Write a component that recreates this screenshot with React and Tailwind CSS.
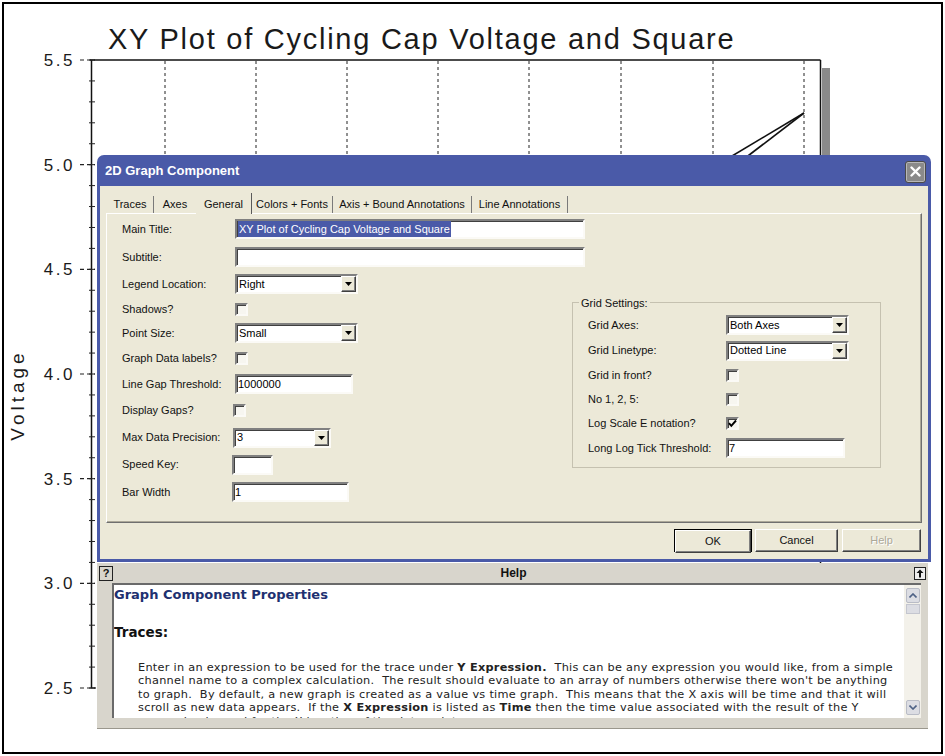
// Plot backdrop with the "2D Graph Component" properties dialog and help pane over it
const sunken =
  "border-2 border-t-[#808080] border-l-[#808080] border-r-[#fbfaf6] border-b-[#fbfaf6] shadow-[inset_1px_1px_0_#404040]";

function Chart() {
  const gridX = [165, 256, 347, 438, 529, 621, 713, 804];
  const labels = ["5.5", "5.0", "4.5", "4.0", "3.5", "3.0", "2.5"];
  const step = 104.67;
  const minor = Array.from({ length: 31 }, (_, i) => 60 + (i * step) / 5);

  return (
    <svg width="937" height="698" viewBox="4 54 937 698" className="block overflow-visible">
      {gridX.map((x) => (
        <line key={x} x1={x} y1="61" x2={x} y2="688" stroke="#222" strokeWidth="1" strokeDasharray="3 3" />
      ))}
      <line x1="90" y1="60" x2="820.5" y2="60" stroke="#111" strokeWidth="1.5" />
      <line x1="820.5" y1="60" x2="820.5" y2="688" stroke="#111" strokeWidth="1.5" />
      <rect x="822" y="68" width="8" height="480" fill="#8a8a8a" />
      <line x1="91.5" y1="60" x2="91.5" y2="688" stroke="#111" strokeWidth="1.5" />
      <line x1="91" y1="688" x2="96" y2="688" stroke="#111" strokeWidth="1.2" />
      {minor.map((y) => (
        <line key={y} x1="89" y1={y} x2="95" y2={y} stroke="#222" strokeWidth="1" />
      ))}
      {labels.map((t, i) => {
        const y = 60 + i * step;
        return (
          <g key={t}>
            <line x1="80" y1={y} x2="95" y2={y} stroke="#222" strokeWidth="1.2" strokeDasharray="4 3" />
            <text x="75" y={y + 6} textAnchor="end" fontSize="17" letterSpacing="2.5" fill="#1a1a1a">
              {t}
            </text>
          </g>
        );
      })}
      <line x1="804" y1="113" x2="722" y2="162" stroke="#111" strokeWidth="1.6" />
      <line x1="804" y1="113" x2="740" y2="162" stroke="#111" strokeWidth="1.6" />
      <text
        x="17"
        y="395"
        transform="rotate(-90 17 395)"
        textAnchor="middle"
        dominantBaseline="central"
        fontSize="19"
        letterSpacing="4"
        fill="#1a1a1a"
      >
        Voltage
      </text>
    </svg>
  );
}

function TextBox({ className, children }) {
  return (
    <div className={`${className} shrink-0 h-[20px] bg-white ${sunken} flex items-center pl-[1px] text-[11px] text-black whitespace-nowrap`}>
      {children}
    </div>
  );
}

function Select({ className, value }) {
  return (
    <div className={`${className} shrink-0 h-[20px] bg-white ${sunken} flex items-center`}>
      <span className="flex-1 pl-[2px] text-[11px] text-black">{value}</span>
      <span className="w-[15px] h-[16px] flex items-center justify-center bg-[#ece9d8] border border-t-white border-l-white border-r-[#404040] border-b-[#404040] shadow-[inset_-1px_-1px_0_#808080]">
        <svg width="7" height="4" viewBox="0 0 7 4">
          <path d="M0 0h7L3.5 4z" fill="#000" />
        </svg>
      </span>
    </div>
  );
}

function Check({ checked, className = "" }) {
  return (
    <div className={`${className} shrink-0 w-[13px] h-[13px] bg-[#f7f6f0] ${sunken} flex items-center justify-center`}>
      {checked && (
        <svg width="9" height="9" viewBox="0 0 9 9">
          <path d="M1 4.2 L3.3 6.8 L8 1.5" fill="none" stroke="#000" strokeWidth="1.9" />
        </svg>
      )}
    </div>
  );
}

function Row({ h, w = "w-[113px]", label, children }) {
  return (
    <div className={`${h} flex items-center`}>
      <span className={`${w} shrink-0 text-[11px] text-[#111] whitespace-nowrap`}>{label}</span>
      {children}
    </div>
  );
}

function Tabs() {
  const tabs = [
    { name: "Traces", cls: "w-[47px] h-[17px] border-r border-r-[#7a7a7a]" },
    { name: "Axes", cls: "w-[42px] h-[17px]" },
    { name: "General", cls: "w-[56px] h-[21px] -mb-[1px] pt-[3px] items-start border-r border-r-[#5a5a5a] relative z-10", active: true },
    { name: "Colors + Fonts", cls: "w-[81px] h-[17px] border-r border-r-[#7a7a7a]" },
    { name: "Axis + Bound Annotations", cls: "w-[139px] h-[17px] border-r border-r-[#7a7a7a]" },
    { name: "Line Annotations", cls: "w-[96px] h-[17px] border-r border-r-[#7a7a7a]" },
  ];
  return (
    <div className="h-[20px] flex items-end ml-[1px]">
      {tabs.map((t) => (
        <div
          key={t.name}
          className={`${t.cls} bg-[#ece9d8] flex justify-center ${t.active ? "" : "items-center"} text-[11px] text-[#111] whitespace-nowrap`}
        >
          {t.name}
        </div>
      ))}
    </div>
  );
}

function GridSettings() {
  return (
    <div className="relative mt-[88px] w-[309px] h-[166px] border border-[#c5c1b0] pl-[15px] pt-[9px] flex flex-col">
      <span className="absolute -top-[8px] left-[6px] px-[2px] bg-[#ece9d8] text-[11px] text-[#111]">Grid Settings:</span>
      <Row h="h-[26px]" w="w-[138px]" label="Grid Axes:">
        <Select className="w-[123px]" value="Both Axes" />
      </Row>
      <Row h="h-[25px]" w="w-[138px]" label="Grid Linetype:">
        <Select className="w-[123px]" value="Dotted Line" />
      </Row>
      <Row h="h-[24px]" w="w-[138px]" label="Grid in front?">
        <Check />
      </Row>
      <Row h="h-[24px]" w="w-[138px]" label="No 1, 2, 5:">
        <Check />
      </Row>
      <Row h="h-[24px]" w="w-[138px]" label="Log Scale E notation?">
        <Check checked />
      </Row>
      <Row h="h-[26px]" w="w-[138px]" label="Long Log Tick Threshold:">
        <TextBox className="w-[119px]">7</TextBox>
      </Row>
    </div>
  );
}

function Panel() {
  return (
    <div className="h-[310px] border border-t-white border-l-white border-r-[#6f6f6f] border-b-[#6f6f6f] shadow-[inset_-1px_-1px_0_#aca899] flex items-start">
      <div className="w-[465px] shrink-0 pl-[15px] pt-[1px] flex flex-col">
        <Row h="h-[28px]" label="Main Title:">
          <TextBox className="w-[350px]">
            <span className="bg-[#4a5aa8] text-white px-[1px]">XY Plot of Cycling Cap Voltage and Square</span>
          </TextBox>
        </Row>
        <Row h="h-[28px]" label="Subtitle:">
          <TextBox className="w-[350px]" />
        </Row>
        <Row h="h-[26px]" label="Legend Location:">
          <Select className="w-[123px]" value="Right" />
        </Row>
        <Row h="h-[24px]" label="Shadows?">
          <Check />
        </Row>
        <Row h="h-[24px]" label="Point Size:">
          <Select className="w-[123px]" value="Small" />
        </Row>
        <Row h="h-[26px]" label="Graph Data labels?">
          <Check />
        </Row>
        <Row h="h-[26px]" label="Line Gap Threshold:">
          <TextBox className="w-[118px]">1000000</TextBox>
        </Row>
        <Row h="h-[27px]" label="Display Gaps?">
          <Check className="-ml-[2px]" />
        </Row>
        <Row h="h-[27px]" label="Max Data Precision:">
          <Select className="w-[98px] -ml-[2px]" value="3" />
        </Row>
        <Row h="h-[27px]" label="Speed Key:">
          <TextBox className="w-[41px] -ml-[3px]" />
        </Row>
        <Row h="h-[28px]" label="Bar Width">
          <TextBox className="w-[117px] -ml-[3px]">1</TextBox>
        </Row>
      </div>
      <GridSettings />
    </div>
  );
}

function Buttons() {
  const raised =
    "h-[23px] flex items-center justify-center text-[11px] bg-[#ece9d8] border border-t-white border-l-white border-r-[#404040] border-b-[#404040] shadow-[inset_-1px_-1px_0_#808080]";
  return (
    <div className="mt-[6px] h-[23px] flex justify-end pr-[1px]">
      <div className="w-[78px] h-[23px] border border-black">
        <div className={`${raised} h-[21px] text-[#111]`}>OK</div>
      </div>
      <div className={`${raised} w-[83px] ml-[3px] text-[#111]`}>Cancel</div>
      <div className={`${raised} w-[79px] ml-[4px] text-[#aca899] [text-shadow:1px_1px_0_#fff]`}>Help</div>
    </div>
  );
}

function Dialog() {
  return (
    <div className="absolute left-[97px] top-[155px] w-[834px] h-[407px] flex flex-col">
      <div className="h-[31px] bg-[#4a5aa8] rounded-t-[7px] flex items-center justify-between pl-[8px] pr-[5px]">
        <span className="text-white text-[13px] font-bold">2D Graph Component</span>
        <div className="mt-[2px] w-[21px] h-[22px] rounded-[3px] bg-[#8a8a8a] border border-[#4a4a4a] shadow-[inset_0_0_0_1px_#b8b8b8] flex items-center justify-center">
          <svg width="11" height="11" viewBox="0 0 11 11">
            <path d="M1.5 1.5 L9.5 9.5 M9.5 1.5 L1.5 9.5" stroke="#fff" strokeWidth="2.4" strokeLinecap="round" />
          </svg>
        </div>
      </div>
      <div className="flex-1 bg-[#ece9d8] border-x-[3px] border-b-[3px] border-[#4a5aa8] px-[6px] pt-[7px] flex flex-col">
        <Tabs />
        <Panel />
        <Buttons />
      </div>
    </div>
  );
}

function Scrollbar() {
  const btn =
    "w-[14px] h-[15px] mx-auto bg-[#dcdde3] border border-[#b9bcc6] rounded-[2px] flex items-center justify-center";
  return (
    <div className="w-[17px] bg-[#f3f1ea] flex flex-col py-[3px]">
      <div className={btn}>
        <svg width="8" height="5" viewBox="0 0 8 5">
          <path d="M0.5 4.5 L4 1 L7.5 4.5" fill="none" stroke="#4d6185" strokeWidth="1.6" />
        </svg>
      </div>
      <div className="w-[14px] h-[10px] mx-auto mt-[1px] bg-[#dcdde3] border border-[#c4c6cf]" />
      <div className="flex-1" />
      <div className={btn}>
        <svg width="8" height="5" viewBox="0 0 8 5">
          <path d="M0.5 0.5 L4 4 L7.5 0.5" fill="none" stroke="#4d6185" strokeWidth="1.6" />
        </svg>
      </div>
    </div>
  );
}

function HelpPane() {
  return (
    <div className="absolute left-[97px] top-[563px] w-[831px] h-[166px] bg-[#d8d5cc] border-b border-[#9a978d] flex flex-col">
      <div className="h-[20px] flex items-center pl-[2px] pr-[2px]">
        <div className="w-[14px] h-[15px] border border-[#222] flex items-center justify-center text-[11px] font-bold text-[#111]">
          ?
        </div>
        <div className="flex-1 text-center text-[12px] font-bold text-[#111]">Help</div>
        <div className="w-[12px] h-[13px] border border-[#222] bg-[#eeeeee] flex items-center justify-center">
          <svg width="8" height="9" viewBox="0 0 8 9">
            <path d="M4 0.5 L7.5 4 L5 4 L5 8.5 L3 8.5 L3 4 L0.5 4 Z" fill="#111" />
          </svg>
        </div>
      </div>
      <div className="flex-1 min-h-0 flex pl-[15px] pr-[7px] pb-[10px]">
        <div className="flex-1 min-h-0 flex bg-white border-t-2 border-l-2 border-t-[#6a6a6a] border-l-[#6a6a6a]">
          <div className="flex-1 min-h-0 overflow-hidden pt-[3px] font-['DejaVu_Sans',Verdana,sans-serif]">
            <div className="text-[13px] leading-[14px] font-bold text-[#203070]">Graph Component Properties</div>
            <div className="mt-[22px] text-[13.5px] leading-[16px] font-bold text-[#111]">Traces:</div>
            <div className="mt-[21px] pl-[24px] text-[11.3px] leading-[13.4px] tracking-[0.28px] text-[#222] whitespace-pre">
              <div>
                Enter in an expression to be used for the trace under <b>Y Expression.</b>  This can be any expression you would like, from a simple
              </div>
              <div>channel name to a complex calculation.  The result should evaluate to an array of numbers otherwise there won't be anything</div>
              <div>to graph.  By default, a new graph is created as a value vs time graph.  This means that the X axis will be time and that it will</div>
              <div>
                scroll as new data appears.  If the <b>X Expression</b> is listed as <b>Time</b> then the time value associated with the result of the Y
              </div>
              <div>expression is used for the X location of the data point.</div>
            </div>
          </div>
          <Scrollbar />
        </div>
      </div>
    </div>
  );
}

export default function App() {
  return (
    <div className="relative w-[945px] h-[756px] bg-white overflow-hidden font-['Liberation_Sans',Arial,sans-serif]">
      <div className="m-[2px] h-[752px] border-2 border-black flex flex-col">
        <div className="h-[50px] pl-[104px] pt-[21px] text-[29px] leading-[29px] tracking-[1.75px] text-[#1a1a1a] whitespace-nowrap">
          XY Plot of Cycling Cap Voltage and Square
        </div>
        <Chart />
      </div>
      <Dialog />
      <HelpPane />
    </div>
  );
}
